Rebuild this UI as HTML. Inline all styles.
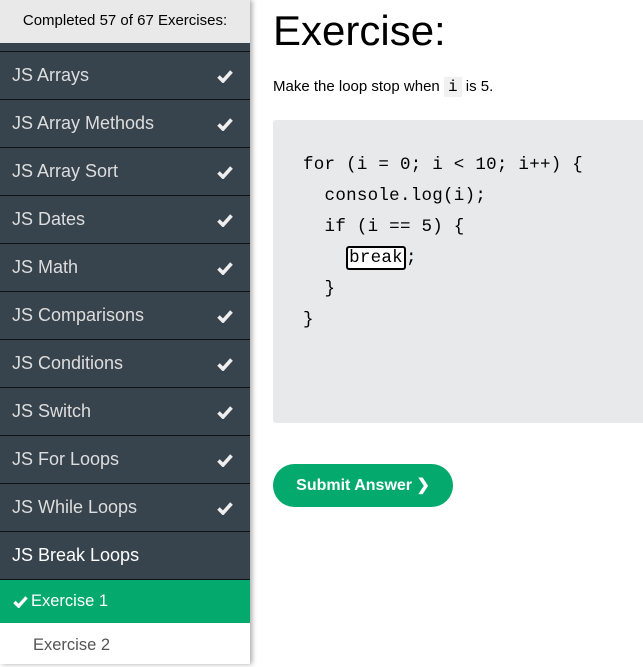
<!DOCTYPE html>
<html><head><style>
body{margin:0;width:643px;height:664px;overflow:hidden;background:#fff;font-family:"Liberation Sans",sans-serif;position:relative}
#side{position:absolute;left:0;top:0;width:250px;height:664px;background:#fff;box-shadow:2px 0 5px rgba(0,0,0,.35)}
#hd{height:43px;background:#e9e9e9;color:#000;font-size:15px;text-align:center;line-height:41px}
#gap{height:8px;background:#38444d}
.it{height:47px;border-top:1px solid #111;color:#ddd;font-size:18px;line-height:47px;padding-left:12px;position:relative;background:#38444d}
.it svg{position:absolute;right:17px;top:17px}
.cur{color:#fff}
.g{background:#04aa6d;color:#fff;height:43px;line-height:43px;font-size:16.5px;padding-left:13px;border-top:1px solid #111;position:relative}
.g svg{vertical-align:-2px;margin-right:3px}
.w{background:#fff;color:#555;height:41px;line-height:44px;font-size:16.5px;padding-left:33px}
h1{position:absolute;left:273px;top:7px;margin:0;font-weight:normal;font-size:42px;color:#000}
#p{position:absolute;left:273px;top:78px;font-size:15px}
#p code{background:#f1f1f1;font-family:"Liberation Mono",monospace;font-size:16px;padding:1px 4px}
#code{position:absolute;left:273px;top:120px;width:380px;height:303px;background:#e7e9eb;border-radius:3px}
pre{margin:0;position:absolute;left:30px;top:30px;font-family:"Liberation Mono",monospace;font-size:17.5px;letter-spacing:0.27px;line-height:31px;color:#000}
.inp{border:2px solid #000;border-radius:3px;padding:0 1px;background:#fff}
#btn{position:absolute;left:273px;top:464px;width:180px;height:43px;border-radius:22px;background:#04aa6d;color:#fff;font-weight:bold;font-size:16px;text-align:center;line-height:43px}
</style></head><body>
<div id="side">
<div id="hd">Completed 57 of 67 Exercises:</div>
<div id="gap"></div>
<div class="it">JS Arrays<svg width="16" height="14" viewBox="0 0 16 14"><path d="M1.5 7.5L6 12 14.5 2.5" fill="none" stroke="#eee" stroke-width="3.6"/></svg></div>
<div class="it">JS Array Methods<svg width="16" height="14" viewBox="0 0 16 14"><path d="M1.5 7.5L6 12 14.5 2.5" fill="none" stroke="#eee" stroke-width="3.6"/></svg></div>
<div class="it">JS Array Sort<svg width="16" height="14" viewBox="0 0 16 14"><path d="M1.5 7.5L6 12 14.5 2.5" fill="none" stroke="#eee" stroke-width="3.6"/></svg></div>
<div class="it">JS Dates<svg width="16" height="14" viewBox="0 0 16 14"><path d="M1.5 7.5L6 12 14.5 2.5" fill="none" stroke="#eee" stroke-width="3.6"/></svg></div>
<div class="it">JS Math<svg width="16" height="14" viewBox="0 0 16 14"><path d="M1.5 7.5L6 12 14.5 2.5" fill="none" stroke="#eee" stroke-width="3.6"/></svg></div>
<div class="it">JS Comparisons<svg width="16" height="14" viewBox="0 0 16 14"><path d="M1.5 7.5L6 12 14.5 2.5" fill="none" stroke="#eee" stroke-width="3.6"/></svg></div>
<div class="it">JS Conditions<svg width="16" height="14" viewBox="0 0 16 14"><path d="M1.5 7.5L6 12 14.5 2.5" fill="none" stroke="#eee" stroke-width="3.6"/></svg></div>
<div class="it">JS Switch<svg width="16" height="14" viewBox="0 0 16 14"><path d="M1.5 7.5L6 12 14.5 2.5" fill="none" stroke="#eee" stroke-width="3.6"/></svg></div>
<div class="it">JS For Loops<svg width="16" height="14" viewBox="0 0 16 14"><path d="M1.5 7.5L6 12 14.5 2.5" fill="none" stroke="#eee" stroke-width="3.6"/></svg></div>
<div class="it">JS While Loops<svg width="16" height="14" viewBox="0 0 16 14"><path d="M1.5 7.5L6 12 14.5 2.5" fill="none" stroke="#eee" stroke-width="3.6"/></svg></div>
<div class="it cur">JS Break Loops</div>
<div class="g"><svg width="15" height="13" viewBox="0 0 16 14"><path d="M1.5 7.5L6 12 14.5 2.5" fill="none" stroke="#fff" stroke-width="3.6"/></svg>Exercise 1</div>
<div class="w">Exercise 2</div>
</div>
<h1>Exercise:</h1>
<div id="p">Make the loop stop when <code>i</code> is 5.</div>
<div id="code"><pre>for (i = 0; i &lt; 10; i++) {
  console.log(i);
  if (i == 5) {
    <span class="inp">break</span>;
  }
}</pre></div>
<div id="btn">Submit Answer ❯</div>
</body></html>
